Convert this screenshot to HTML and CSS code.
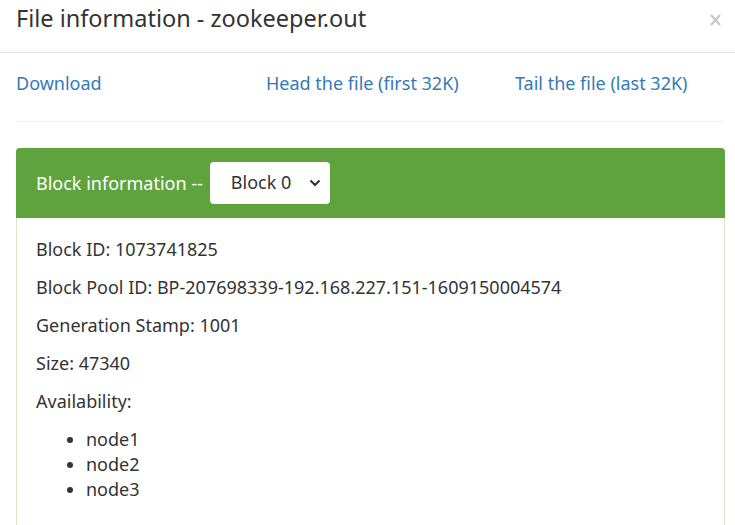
FILE: index.html
```html
<!DOCTYPE html>
<html lang="en">
<head>
    <meta charset="UTF-8">
    <title>File information - zookeeper.out</title>
    <link rel="stylesheet" href="styles.css">
</head>
<body>
    <div class="modal-content">
        <!-- header -->
        <div class="modal-header">
            <h4 class="modal-title">File information - zookeeper.out</h4>
            <span class="close">
                <svg width="11" height="12" viewBox="0 0 11 12">
                    <path d="M1 1 L10 11 M10 1 L1 11" stroke="#c6c6c6" stroke-width="2" fill="none"/>
                </svg>
            </span>
        </div>

        <!-- body -->
        <div class="modal-body">
            <div class="file-links">
                <a href="#">Download</a>
                <a href="#">Head the file (first 32K)</a>
                <a href="#">Tail the file (last 32K)</a>
            </div>
            <hr>

            <div class="panel">
                <div class="panel-heading">
                    <span>Block information --</span>
                    <div class="block-select">
                        <span>Block 0</span>
                        <svg width="12" height="8" viewBox="0 0 12 8">
                            <path d="M1.5 1.5 L6 6 L10.5 1.5" stroke="#333" stroke-width="2" fill="none"/>
                        </svg>
                    </div>
                </div>
                <div class="panel-body">
                    <p>Block ID: 1073741825</p>
                    <p>Block Pool ID: BP-207698339-192.168.227.151-1609150004574</p>
                    <p>Generation Stamp: 1001</p>
                    <p>Size: 47340</p>
                    <p>Availability:</p>
                    <ul>
                        <li>node1</li>
                        <li>node2</li>
                        <li>node3</li>
                    </ul>
                </div>
            </div>
        </div>
    </div>
</body>
</html>
```

FILE: styles.css
```css
/* Reset */
* {
    margin: 0;
    padding: 0;
    box-sizing: border-box;
}

body {
    font-family: 'Noto Sans', 'Open Sans', sans-serif;
    font-size: 18px;
    line-height: 25px;
    color: #333333;
    background: #ffffff;
    width: 735px;
    height: 525px;
    overflow: hidden;
}

/* Header */
.modal-header {
    height: 53px;
    padding: 1px 16px 0;
    border-bottom: 1px solid #e5e5e5;
    display: flex;
    justify-content: space-between;
    align-items: flex-start;
}

.modal-title {
    font-size: 23.5px;
    font-weight: 400;
    line-height: 34px;
}

.close {
    display: block;
    margin-top: 6px;
    margin-right: -2px;
}

/* Body */
.modal-body {
    padding: 0 16px;
}

.file-links {
    display: grid;
    grid-template-columns: 250px 249px auto;
    padding: 15px 0 0;
    height: 68px;
}

.file-links a {
    color: #337ab7;
    text-decoration: none;
    line-height: 30px;
}

hr {
    border: none;
    border-top: 1px solid #eeeeee;
    margin: 0 0 26px;
    width: 708px;
}

/* Panel */
.panel {
    width: 709px;
    border: 1px solid #d6e9c6;
    border-bottom: none;
    border-radius: 4px 4px 0 0;
}

.panel-heading {
    height: 70px;
    margin: -1px -1px 0;
    background: #5fa33e;
    color: #ffffff;
    border-radius: 4px 4px 0 0;
    display: flex;
    align-items: center;
    padding: 0 20px;
    gap: 7px;
}

.block-select {
    width: 120px;
    height: 42px;
    margin-top: -1px;
    background: #ffffff;
    color: #333333;
    border-radius: 4px;
    display: flex;
    align-items: center;
    justify-content: space-between;
    padding: 0 9px 0 21px;
    font-size: 18px;
}

.panel-body {
    padding: 19px 19px 30px;
}

.panel-body p {
    margin-bottom: 13px;
}

.panel-body ul {
    padding-left: 50px;
}
```
